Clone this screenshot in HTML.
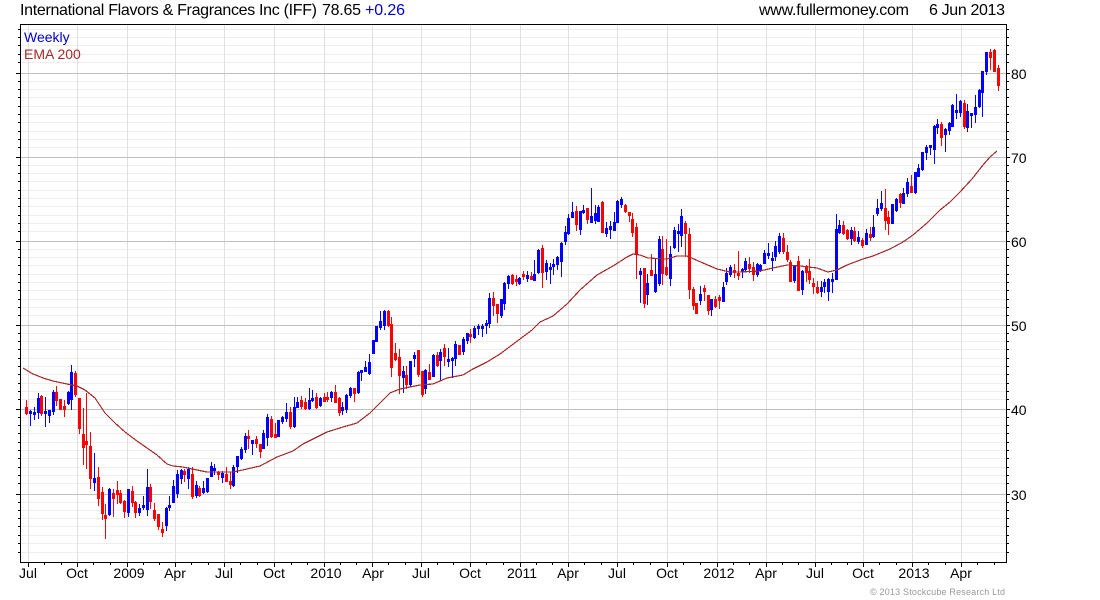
<!DOCTYPE html>
<html><head><meta charset="utf-8"><title>IFF Weekly</title>
<style>html,body{margin:0;padding:0;background:#fff;width:1100px;height:600px;overflow:hidden}svg{display:block}text{font-family:"Liberation Sans",Arial,sans-serif}</style></head>
<body>
<svg xmlns="http://www.w3.org/2000/svg" width="1100" height="600" viewBox="0 0 1100 600">
<rect width="1100" height="600" fill="#fff"/>
<g shape-rendering="crispEdges" fill="none">
<path stroke="#eeeeee" d="M21 29.5H1006M21 37.5H1006M21 45.5H1006M21 54.5H1006M21 62.5H1006M21 81.5H1006M21 89.5H1006M21 97.5H1006M21 106.5H1006M21 114.5H1006M21 122.5H1006M21 131.5H1006M21 139.5H1006M21 147.5H1006M21 165.5H1006M21 173.5H1006M21 181.5H1006M21 190.5H1006M21 198.5H1006M21 206.5H1006M21 215.5H1006M21 223.5H1006M21 231.5H1006M21 249.5H1006M21 257.5H1006M21 265.5H1006M21 274.5H1006M21 282.5H1006M21 290.5H1006M21 299.5H1006M21 307.5H1006M21 315.5H1006M21 333.5H1006M21 341.5H1006M21 349.5H1006M21 358.5H1006M21 366.5H1006M21 374.5H1006M21 383.5H1006M21 391.5H1006M21 399.5H1006M21 417.5H1006M21 425.5H1006M21 433.5H1006M21 442.5H1006M21 450.5H1006M21 458.5H1006M21 467.5H1006M21 475.5H1006M21 483.5H1006M21 502.5H1006M21 510.5H1006M21 518.5H1006M21 526.5H1006M21 535.5H1006M21 543.5H1006M21 552.5H1006"/>
<path stroke="#e0e0e0" d="M28.5 25V563M77.5 25V563M127.5 25V563M175.5 25V563M224.5 25V563M274.5 25V563M324.5 25V563M372.5 25V563M421.5 25V563M470.5 25V563M520.5 25V563M568.5 25V563M617.5 25V563M667.5 25V563M717.5 25V563M766.5 25V563M815.5 25V563M863.5 25V563M912.5 25V563M961.5 25V563"/>
<path stroke="#c0c0c0" d="M21 73.5H1006M21 157.5H1006M21 241.5H1006M21 325.5H1006M21 409.5H1006M21 494.5H1006"/>
<path stroke="#000" d="M20.5 24.5H1006.5V562.5H20.5Z"/>
<path stroke="#000" d="M18 29.5h2M18 37.5h2M18 45.5h2M18 54.5h2M18 62.5h2M18 81.5h2M18 89.5h2M18 97.5h2M18 106.5h2M18 114.5h2M18 122.5h2M18 131.5h2M18 139.5h2M18 147.5h2M18 165.5h2M18 173.5h2M18 181.5h2M18 190.5h2M18 198.5h2M18 206.5h2M18 215.5h2M18 223.5h2M18 231.5h2M18 249.5h2M18 257.5h2M18 265.5h2M18 274.5h2M18 282.5h2M18 290.5h2M18 299.5h2M18 307.5h2M18 315.5h2M18 333.5h2M18 341.5h2M18 349.5h2M18 358.5h2M18 366.5h2M18 374.5h2M18 383.5h2M18 391.5h2M18 399.5h2M18 417.5h2M18 425.5h2M18 433.5h2M18 442.5h2M18 450.5h2M18 458.5h2M18 467.5h2M18 475.5h2M18 483.5h2M18 502.5h2M18 510.5h2M18 518.5h2M18 526.5h2M18 535.5h2M18 543.5h2M18 552.5h2M16 73.5h4M16 157.5h4M16 241.5h4M16 325.5h4M16 409.5h4M16 494.5h4"/>
<path stroke="#000" d="M1007 29.5h2M1007 37.5h2M1007 45.5h2M1007 54.5h2M1007 62.5h2M1007 81.5h2M1007 89.5h2M1007 97.5h2M1007 106.5h2M1007 114.5h2M1007 122.5h2M1007 131.5h2M1007 139.5h2M1007 147.5h2M1007 165.5h2M1007 173.5h2M1007 181.5h2M1007 190.5h2M1007 198.5h2M1007 206.5h2M1007 215.5h2M1007 223.5h2M1007 231.5h2M1007 249.5h2M1007 257.5h2M1007 265.5h2M1007 274.5h2M1007 282.5h2M1007 290.5h2M1007 299.5h2M1007 307.5h2M1007 315.5h2M1007 333.5h2M1007 341.5h2M1007 349.5h2M1007 358.5h2M1007 366.5h2M1007 374.5h2M1007 383.5h2M1007 391.5h2M1007 399.5h2M1007 417.5h2M1007 425.5h2M1007 433.5h2M1007 442.5h2M1007 450.5h2M1007 458.5h2M1007 467.5h2M1007 475.5h2M1007 483.5h2M1007 502.5h2M1007 510.5h2M1007 518.5h2M1007 526.5h2M1007 535.5h2M1007 543.5h2M1007 552.5h2M1007 73.5h3M1007 157.5h3M1007 241.5h3M1007 325.5h3M1007 409.5h3M1007 494.5h3"/>
<path stroke="#000" d="M28.5 563v4M77.5 563v4M127.5 563v4M175.5 563v4M224.5 563v4M274.5 563v4M324.5 563v4M372.5 563v4M421.5 563v4M470.5 563v4M520.5 563v4M568.5 563v4M617.5 563v4M667.5 563v4M717.5 563v4M766.5 563v4M815.5 563v4M863.5 563v4M912.5 563v4M961.5 563v4M44.5 563v2M61.5 563v2M93.5 563v2M110.5 563v2M143.5 563v2M159.5 563v2M191.5 563v2M208.5 563v2M240.5 563v2M257.5 563v2M291.5 563v2M307.5 563v2M340.5 563v2M356.5 563v2M388.5 563v2M405.5 563v2M437.5 563v2M453.5 563v2M486.5 563v2M503.5 563v2M536.5 563v2M552.5 563v2M584.5 563v2M601.5 563v2M633.5 563v2M650.5 563v2M683.5 563v2M700.5 563v2M733.5 563v2M749.5 563v2M782.5 563v2M798.5 563v2M831.5 563v2M847.5 563v2M879.5 563v2M896.5 563v2M928.5 563v2M945.5 563v2M977.5 563v2M994.5 563v2"/>

<path stroke="#0000ff" stroke-width="1" d="M30.5 410V426M34.5 407V420M38.5 393V419M45.5 397V427M49.5 410V423M53.5 390V415M68.5 391V405M71.5 365V410M94.5 453V491M109.5 488V516M128.5 489V517M139.5 504V516M143.5 496V510M147.5 469V516M166.5 507V531M169.5 496V511M173.5 480V503M177.5 470V498M181.5 469V484M188.5 467V489M196.5 481V498M203.5 481V494M207.5 478V493M211.5 462V477M214.5 464V475M222.5 471V483M233.5 465V487M237.5 456V473M241.5 447V460M245.5 433V453M252.5 440V455M263.5 430V449M267.5 414V446M278.5 420V437M282.5 416V424M286.5 403V422M294.5 397V428M297.5 397V408M309.5 388V410M312.5 390V402M320.5 397V407M331.5 391V402M342.5 402V415M346.5 394V413M350.5 387V398M358.5 371V394M361.5 370V381M365.5 361V372M369.5 354V375M373.5 340V354M376.5 326V342M380.5 311V330M384.5 310V330M403.5 366V393M410.5 361V387M414.5 352V367M425.5 369V394M433.5 354V377M440.5 349V381M448.5 348V367M452.5 357V378M455.5 341V366M463.5 337V355M467.5 333V344M474.5 326V339M478.5 324V335M482.5 324V337M486.5 320V334M489.5 293V328M501.5 299V318M504.5 282V310M508.5 275V289M519.5 277V285M527.5 271V282M534.5 260V281M538.5 249V274M546.5 260V280M550.5 263V284M553.5 259V275M557.5 256V270M561.5 242V277M565.5 226V245M568.5 214V235M572.5 202V218M580.5 211V235M583.5 205V214M591.5 188V223M595.5 205V224M598.5 205V222M606.5 222V237M610.5 221V239M614.5 212V231M617.5 200V223M621.5 197V208M640.5 268V303M647.5 274V305M655.5 259V293M659.5 236V286M670.5 246V286M674.5 227V249M678.5 224V252M681.5 209V247M700.5 286V305M711.5 299V316M723.5 282V302M726.5 268V285M730.5 265V277M742.5 268V278M745.5 258V271M757.5 263V277M760.5 264V272M764.5 250V264M768.5 243V259M772.5 252V271M775.5 241V261M779.5 233V254M794.5 265V283M802.5 270V295M821.5 281V297M824.5 279V293M828.5 278V301M832.5 273V293M836.5 214V280M839.5 220V234M851.5 227V245M858.5 231V244M866.5 229V245M873.5 215V238M877.5 199V216M881.5 191V211M892.5 204V224M896.5 198V212M903.5 188V204M907.5 178V197M915.5 172V194M918.5 164V177M922.5 152V171M926.5 145V160M930.5 145V155M934.5 125V164M937.5 119V134M945.5 128V152M949.5 122V135M952.5 104V127M956.5 94V119M960.5 100V117M967.5 104V132M971.5 113V128M975.5 95V123M979.5 89V108M982.5 71V117M986.5 52V75"/>
<path stroke="#0000ff" stroke-width="3" d="M30.5 411V414M34.5 412V415M38.5 398V413M45.5 411V414M49.5 410V416M53.5 392V412M68.5 392V404M71.5 372V400M94.5 478V483M109.5 489V515M128.5 489V513M139.5 508V513M143.5 505V508M147.5 487V510M166.5 508V526M169.5 505V508M173.5 486V503M177.5 474V494M181.5 470V479M188.5 469V479M196.5 485V496M203.5 488V493M207.5 478V492M211.5 466V477M214.5 468V471M222.5 473V478M233.5 467V486M237.5 456V467M241.5 449V459M245.5 436V450M252.5 440V444M263.5 433V449M267.5 417V438M278.5 420V437M282.5 417V422M286.5 412V419M294.5 407V427M297.5 402V408M309.5 400V409M312.5 398V401M320.5 398V406M331.5 392V398M342.5 407V411M346.5 395V410M350.5 388V396M358.5 372V393M361.5 370V373M365.5 367V372M369.5 362V374M373.5 340V354M376.5 326V342M380.5 321V328M384.5 311V326M403.5 371V378M410.5 361V385M414.5 355V359M425.5 370V389M433.5 355V377M440.5 352V361M448.5 359V362M452.5 358V361M455.5 344V359M463.5 339V352M467.5 333V341M474.5 328V338M478.5 326V329M482.5 326V329M486.5 323V326M489.5 298V324M501.5 299V316M504.5 283V304M508.5 276V284M519.5 278V284M527.5 275V279M534.5 274V281M538.5 250V273M546.5 263V272M550.5 267V270M553.5 264V267M557.5 257V265M561.5 243V262M565.5 232V242M568.5 218V234M572.5 212V218M580.5 211V230M583.5 210V213M591.5 216V223M595.5 213V221M598.5 207V222M606.5 228V234M610.5 226V230M614.5 222V231M617.5 201V223M621.5 199V205M640.5 271V275M647.5 283V295M655.5 274V292M659.5 239V284M670.5 254V279M674.5 230V248M678.5 231V234M681.5 216V236M700.5 294V301M711.5 299V310M723.5 287V302M726.5 273V282M730.5 267V275M742.5 269V272M745.5 261V270M757.5 264V275M760.5 265V271M764.5 253V264M768.5 253V256M772.5 258V261M775.5 246V257M779.5 236V252M794.5 266V281M802.5 271V290M821.5 287V292M824.5 282V287M828.5 279V292M832.5 279V282M836.5 229V280M839.5 225V233M851.5 230V239M858.5 237V242M866.5 233V245M873.5 227V237M877.5 208V214M881.5 203V209M892.5 204V224M896.5 199V211M903.5 193V204M907.5 182V194M915.5 172V193M918.5 168V177M922.5 152V170M926.5 147V153M930.5 145V148M934.5 126V150M937.5 124V128M945.5 129V135M949.5 123V131M952.5 105V127M956.5 110V113M960.5 101V113M967.5 111V128M971.5 113V116M975.5 107V115M979.5 90V107M982.5 71V93M986.5 52V72"/>
<path stroke="#ff0000" stroke-width="1" d="M26.5 400V415M41.5 395V416M56.5 386V406M60.5 399V410M64.5 400V417M75.5 371V397M79.5 398V434M83.5 408V465M86.5 393V469M90.5 432V489M98.5 467V506M102.5 487V520M105.5 504V539M113.5 489V517M117.5 481V504M120.5 490V504M124.5 500V518M132.5 486V507M135.5 501V518M150.5 484V509M154.5 503V521M158.5 514V530M162.5 522V537M184.5 469V482M192.5 467V499M199.5 486V497M218.5 471V480M226.5 467V482M230.5 472V489M248.5 430V449M256.5 436V448M260.5 444V458M271.5 416V438M275.5 423V438M290.5 407V429M301.5 396V409M305.5 398V410M316.5 393V409M324.5 393V402M327.5 392V402M335.5 385V403M339.5 397V416M354.5 388V402M388.5 310V327M391.5 317V377M395.5 343V361M399.5 349V394M406.5 366V389M418.5 350V377M422.5 371V397M429.5 364V380M437.5 352V367M444.5 344V366M459.5 345V355M470.5 329V343M493.5 292V316M497.5 304V323M512.5 274V285M516.5 275V286M523.5 271V280M531.5 272V280M542.5 245V288M576.5 206V231M587.5 208V224M602.5 201V233M625.5 204V213M629.5 212V222M632.5 213V237M636.5 223V279M644.5 268V308M651.5 254V276M662.5 236V285M666.5 239V276M685.5 221V257M689.5 228V299M693.5 287V310M696.5 303V314M704.5 285V301M708.5 295V315M715.5 296V308M719.5 295V309M734.5 264V278M738.5 251V280M749.5 257V273M753.5 262V281M783.5 233V254M787.5 245V262M790.5 260V282M798.5 256V291M806.5 265V282M809.5 259V284M813.5 278V294M817.5 281V294M843.5 221V235M847.5 229V240M854.5 227V242M862.5 238V248M870.5 227V241M885.5 189V230M888.5 211V235M900.5 193V208M911.5 175V193M941.5 122V146M964.5 100V129M990.5 49V70M994.5 49V72M998.5 65V91"/>
<path stroke="#ff0000" stroke-width="3" d="M26.5 407V414M41.5 396V414M56.5 392V401M60.5 399V410M64.5 406V410M75.5 373V395M79.5 398V429M83.5 434V448M86.5 441V445M90.5 446V479M98.5 477V499M102.5 492V514M105.5 515V519M113.5 493V499M117.5 490V495M120.5 493V503M124.5 501V512M132.5 491V503M135.5 502V513M150.5 487V502M154.5 510V519M158.5 514V527M162.5 529V533M184.5 471V475M192.5 474V497M199.5 488V496M218.5 472V475M226.5 474V482M230.5 481V485M248.5 436V439M256.5 439V444M260.5 444V452M271.5 419V437M275.5 434V438M290.5 412V427M301.5 400V407M305.5 402V409M316.5 397V408M324.5 397V402M327.5 397V400M335.5 392V403M339.5 398V413M354.5 388V394M388.5 311V326M391.5 324V368M395.5 353V360M399.5 357V376M406.5 375V385M418.5 350V375M422.5 371V395M429.5 372V380M437.5 355V366M444.5 348V357M459.5 345V355M470.5 334V337M493.5 298V306M497.5 304V314M512.5 275V284M516.5 279V282M523.5 274V277M531.5 276V280M542.5 248V273M576.5 211V225M587.5 208V220M602.5 202V233M625.5 205V212M629.5 212V216M632.5 219V233M636.5 227V254M644.5 268V304M651.5 270V276M662.5 249V274M666.5 267V275M685.5 223V234M689.5 234V290M693.5 289V306M696.5 303V314M704.5 288V292M708.5 295V311M715.5 299V307M719.5 297V301M734.5 270V273M738.5 273V276M749.5 264V269M753.5 267V275M783.5 238V252M787.5 252V260M790.5 262V282M798.5 261V291M806.5 266V273M809.5 271V280M813.5 283V287M817.5 287V293M843.5 225V234M847.5 230V239M854.5 231V241M862.5 240V246M870.5 234V238M885.5 208V221M888.5 217V224M900.5 194V203M911.5 186V193M941.5 124V138M964.5 103V127M990.5 52V58M994.5 50V72M998.5 68V86"/>
</g>
<path fill="none" stroke="#a52a2a" stroke-width="1.2" shape-rendering="crispEdges" d="M23 368L33 374L43 378L53 381L67 384L77 386L85 390L95 398L105 413L115 423L125 432L137 441L147 448L157 455L167 464L173 466L183 467L197 470L207 472L227 472L233 472L247 469L260 466L277 457L293 451L303 444L327 432L343 427L357 423L370 413L380 403L390 393L400 389L420 385L433 384L447 378L463 375L473 369L487 362L500 354L516 342L532 330L540 322L553 316L567 304L580 290L597 275L613 266L627 257L633 254L640 255L648 258L667 259L677 256L687 256L703 263L717 269L730 272L740 272L760 271L773 268L787 265L800 266L817 268L828 272L837 270L847 265L863 259L873 256L890 249L903 242L913 235L927 223L940 210L950 202L960 192L972 179L983 165L990 157L997 151"/>
<g font-size="16" fill="#000">
<text x="20" y="15" textLength="297" lengthAdjust="spacing">International Flavors &amp; Fragrances Inc (IFF)</text>
<text x="322" y="15" textLength="39" lengthAdjust="spacing" xml:space="preserve">78.65</text>
<text x="365" y="15" fill="#0000cd" textLength="40" lengthAdjust="spacing">+0.26</text>
<text x="759" y="15" textLength="150" lengthAdjust="spacing">www.fullermoney.com</text>
<text x="929" y="15" textLength="76" lengthAdjust="spacing">6 Jun 2013</text>
</g>
<text x="24" y="42" font-size="14" fill="#0000cd">Weekly</text>
<text x="24" y="59" font-size="14" fill="#a52a2a">EMA 200</text>
<g font-size="14" fill="#000">
<text x="1011" y="79">80</text><text x="1011" y="163">70</text><text x="1011" y="247">60</text><text x="1011" y="331">50</text><text x="1011" y="415">40</text><text x="1011" y="500">30</text>
</g>
<g font-size="14" fill="#000" text-anchor="middle">
<text x="28" y="578">Jul</text><text x="77" y="578">Oct</text><text x="129" y="578">2009</text><text x="175" y="578">Apr</text><text x="224" y="578">Jul</text><text x="274" y="578">Oct</text><text x="326" y="578">2010</text><text x="373" y="578">Apr</text><text x="421" y="578">Jul</text><text x="470" y="578">Oct</text><text x="522" y="578">2011</text><text x="568" y="578">Apr</text><text x="617" y="578">Jul</text><text x="667" y="578">Oct</text><text x="719" y="578">2012</text><text x="766" y="578">Apr</text><text x="815" y="578">Jul</text><text x="863" y="578">Oct</text><text x="914" y="578">2013</text><text x="961" y="578">Apr</text>
</g>
<text x="870" y="595" font-size="9" fill="#999" textLength="135" lengthAdjust="spacing">© 2013 Stockcube Research Ltd</text>
</svg>
</body></html>
